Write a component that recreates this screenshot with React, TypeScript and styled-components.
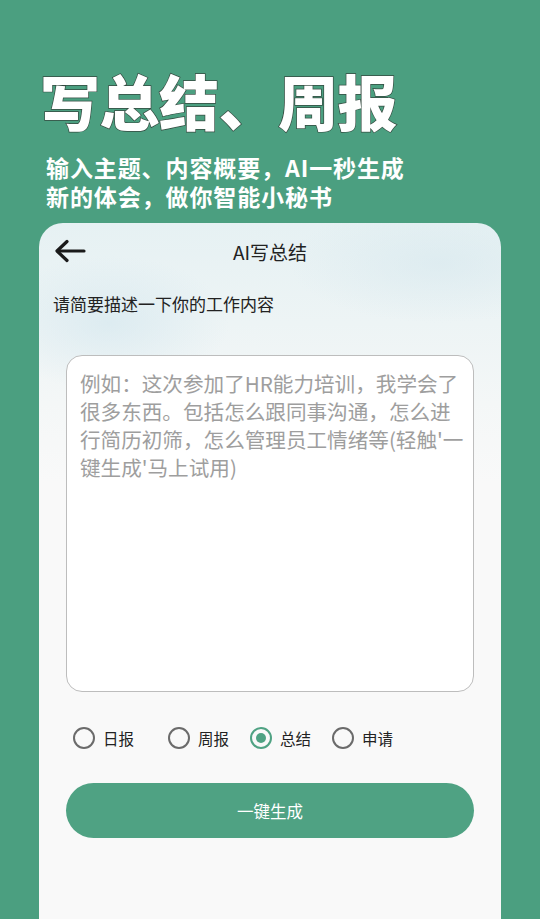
import React, { useState } from "react";
import styled, { createGlobalStyle } from "styled-components";

const GlobalStyle = createGlobalStyle`
  html, body { margin: 0; padding: 0; background: #4b9f80; }
  body { font-family: "Noto Sans CJK SC", "Noto Sans", sans-serif; }
  * { box-sizing: border-box; }
`;

const Page = styled.div`
  width: 540px;
  height: 919px;
  overflow: hidden;
  background: #4b9f80;
  display: flex;
  flex-direction: column;
`;

const Hero = styled.header`
  padding: 69px 0 0 40px;
  display: flex;
  flex-direction: column;
`;

const BigTitle = styled.h1`
  margin: 0;
  font-size: 60px;
  line-height: 62px;
  font-weight: 900;
  color: #fff;
  letter-spacing: -0.5px;
  -webkit-text-stroke: 1.4px #34493f;
  paint-order: stroke fill;
`;

const Subtitle = styled.p`
  margin: 22px 0 0 6px;
  font-size: 23px;
  line-height: 29px;
  font-weight: 700;
  color: #fff;
  letter-spacing: 0.9px;
`;

const Card = styled.main`
  margin: 12px 0 0 39px;
  width: 462px;
  flex: 1;
  border-radius: 24px 24px 0 0;
  background:
    radial-gradient(ellipse 160px 90px at 70px 100px, rgba(210, 230, 238, 0.6), transparent 75%),
    radial-gradient(ellipse 200px 80px at 400px 40px, rgba(215, 232, 238, 0.6), transparent 75%),
    linear-gradient(180deg, #e6f1f3 0px, #edf4f5 100px, #f4f7f7 180px, #f9f9f9 260px);
  display: flex;
  flex-direction: column;
  padding: 0 27px;
`;

const TopBar = styled.div`
  height: 56px;
  display: flex;
  align-items: center;
  position: relative;
  margin: 0 -12px;
`;

const BackButton = styled.button`
  border: none;
  background: none;
  padding: 0;
  width: 34px;
  height: 30px;
  display: flex;
  align-items: center;
  cursor: pointer;
`;

const BarTitle = styled.div`
  position: absolute;
  left: 0;
  right: 0;
  text-align: center;
  font-size: 19px;
  color: #222;
  pointer-events: none;
`;

const Prompt = styled.div`
  margin: 13px 0 0 -13px;
  font-size: 17px;
  line-height: 24px;
  color: #222;
`;

const Field = styled.textarea`
  margin-top: 39px;
  width: 408px;
  height: 337px;
  border: 1px solid #bdbdbd;
  border-radius: 16px;
  background: #fff;
  padding: 13px 6px 13px 13px;
  font-family: "Noto Sans CJK SC", "Noto Sans", sans-serif;
  font-size: 20.6px;
  line-height: 28px;
  color: #333;
  resize: none;
  outline: none;
  overflow: hidden;
  &::placeholder { color: #9e9e9e; }
`;

const RadioRow = styled.div`
  margin-top: 34px;
  height: 24px;
  display: flex;
  align-items: center;
  padding-left: 7px;
`;

const RadioItem = styled.label<{ $extra?: number }>`
  display: flex;
  align-items: center;
  gap: 8px;
  margin-right: ${(p) => 21 + (p.$extra || 0)}px;
  font-size: 15.5px;
  color: #222;
  cursor: pointer;
`;

const Circle = styled.span<{ $on: boolean }>`
  width: 22px;
  height: 22px;
  border-radius: 50%;
  border: 2px solid ${(p) => (p.$on ? "#4fa283" : "#6b6b6b")};
  display: flex;
  align-items: center;
  justify-content: center;
  &::after {
    content: "";
    width: 10px;
    height: 10px;
    border-radius: 50%;
    background: ${(p) => (p.$on ? "#4fa283" : "transparent")};
  }
`;

const Generate = styled.button`
  margin-top: 33px;
  width: 408px;
  height: 55px;
  border: none;
  border-radius: 28px;
  background: #4fa283;
  color: #fff;
  font-family: "Noto Sans CJK SC", "Noto Sans", sans-serif;
  font-size: 16.5px;
  cursor: pointer;
`;

const options = ["日报", "周报", "总结", "申请"];

export default function App() {
  const [sel, setSel] = useState("总结");
  return (
    <Page>
      <GlobalStyle />
      <Hero>
        <BigTitle>写总结、周报</BigTitle>
        <Subtitle>
          输入主题、内容概要，AI一秒生成
          <br />
          新的体会，做你智能小秘书
        </Subtitle>
      </Hero>
      <Card>
        <TopBar>
          <BackButton aria-label="返回">
            <svg width="32" height="24" viewBox="0 0 32 24" fill="none">
              <path d="M30 12H4" stroke="#1a1a1a" strokeWidth="3.2" strokeLinecap="round" />
              <path d="M13 2.5L3 12l10 9.5" stroke="#1a1a1a" strokeWidth="3.2" strokeLinecap="round" strokeLinejoin="round" />
            </svg>
          </BackButton>
          <BarTitle>AI写总结</BarTitle>
        </TopBar>
        <Prompt>请简要描述一下你的工作内容</Prompt>
        <Field placeholder="例如：这次参加了HR能力培训，我学会了很多东西。包括怎么跟同事沟通，怎么进行简历初筛，怎么管理员工情绪等(轻触'一键生成'马上试用)" />
        <RadioRow>
          {options.map((o, i) => (
            <RadioItem key={o} $extra={i === 0 ? 13 : 0} onClick={() => setSel(o)}>
              <Circle $on={sel === o} />
              {o}
            </RadioItem>
          ))}
        </RadioRow>
        <Generate>一键生成</Generate>
      </Card>
    </Page>
  );
}
